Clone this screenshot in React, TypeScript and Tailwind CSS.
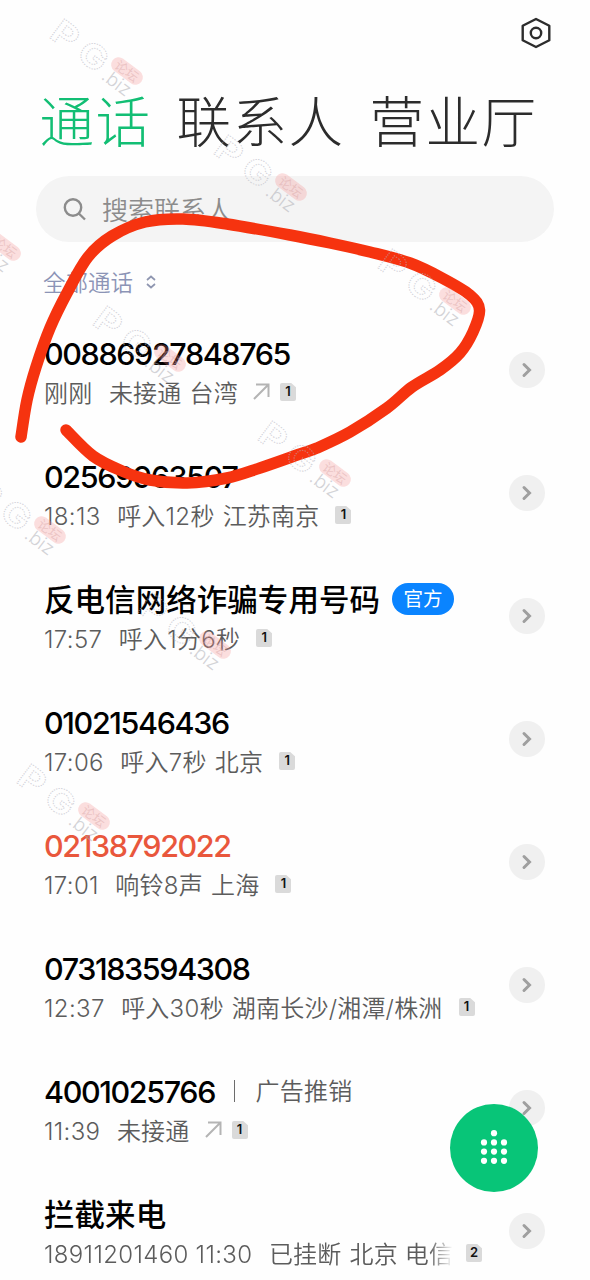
import React from "react";

type Call = {
  name: string;
  danger?: boolean;
  badge?: string;
  tag?: string;
  time: string;
  detail: string;
  place?: string;
  outgoing?: boolean;
  sim: number;
  faded?: boolean;
};

const calls: Call[] = [
  { name: "00886927848765", time: "刚刚", detail: "未接通", place: "台湾", outgoing: true, sim: 1 },
  { name: "02569963507", time: "18:13", detail: "呼入12秒", place: "江苏南京", sim: 1 },
  { name: "反电信网络诈骗专用号码", badge: "官方", time: "17:57", detail: "呼入1分6秒", sim: 1 },
  { name: "01021546436", time: "17:06", detail: "呼入7秒", place: "北京", sim: 1 },
  { name: "02138792022", danger: true, time: "17:01", detail: "响铃8声", place: "上海", sim: 1 },
  { name: "073183594308", time: "12:37", detail: "呼入30秒", place: "湖南长沙/湘潭/株洲", sim: 1 },
  { name: "4001025766", tag: "广告推销", time: "11:39", detail: "未接通", outgoing: true, sim: 1 },
  { name: "拦截来电", time: "18911201460 11:30", detail: "已挂断", place: "北京 电信", sim: 2, faded: true },
];

function Mixed({ text, latin }: { text: string; latin: string }) {
  return (
    <>
      {text.split(/([0-9:]+)/).map((part, i) =>
        i % 2 ? (
          <span key={i} className={latin}>{part}</span>
        ) : (
          <React.Fragment key={i}>{part}</React.Fragment>
        ),
      )}
    </>
  );
}

function Sim({ n }: { n: number }) {
  return (
    <span className="relative flex h-[18px] w-4 shrink-0 items-center justify-center">
      <svg className="absolute inset-0" width="16" height="18" viewBox="0 0 16 18">
        <path d="M2 0H11.2L16 4.2V16A2 2 0 0 1 14 18H2A2 2 0 0 1 0 16V2A2 2 0 0 1 2 0Z" fill="#dadada" />
      </svg>
      <span className="relative font-[Inter] text-[13px] leading-none font-semibold tracking-normal text-[#111]">{n}</span>
    </span>
  );
}

function Row({ call }: { call: Call }) {
  const sub = "tracking-[0.35px]";
  return (
    <div className="flex h-[123px] shrink-0 items-center justify-between pr-[45px] pl-[44px]">
      <div className="flex flex-col pt-1.5">
        <div className="flex h-10 items-center">
          <span
            className={`text-[30.5px] leading-10 font-medium tracking-[0.05px] ${call.danger ? "text-[#e9573c]" : "text-black"}`}
          >
            <Mixed text={call.name} latin="tracking-[-1.38px]" />
          </span>
          {call.badge && (
            <span className="mb-0.5 ml-3 flex h-8 w-[62px] items-center justify-center rounded-full bg-[#0a84ff] pt-0.5 text-[19.5px] text-white">
              {call.badge}
            </span>
          )}
          {call.tag && (
            <>
              <span className="mb-px ml-[19px] h-[22px] w-[1.5px] bg-[#6c6c6c]" />
              <span className="ml-5 text-2xl font-[350] tracking-[0.3px] text-[#5c5c5c]">{call.tag}</span>
            </>
          )}
        </div>
        <div className="flex h-10 items-center text-2xl font-[350] tracking-[0.2px] whitespace-nowrap text-[#5c5c5c]">
          <span className={call.faded ? "flex w-[409px] overflow-hidden [mask-image:linear-gradient(to_right,black_385px,transparent_409px)]" : "flex"}>
            <span><Mixed text={call.time} latin={sub} /></span>
            <span className="ml-[16.5px]"><Mixed text={call.detail} latin={sub} /></span>
            {call.place && <span className="ml-2">{call.place}</span>}
          </span>
          {call.outgoing && (
            <svg className="mb-1 ml-[15px] shrink-0" width="17" height="17" viewBox="0 0 17 17" fill="none" stroke="#b4b4b4" strokeWidth="2">
              <path d="M1 16L15.5 1.5M3 1.5H15.5V14" />
            </svg>
          )}
          <span className={call.outgoing ? "mb-1 ml-2.5" : call.faded ? "mb-1 ml-[13px]" : "mb-1 ml-4"}><Sim n={call.sim} /></span>
        </div>
      </div>
      <span className="mb-px flex size-9 shrink-0 items-center justify-center rounded-full bg-[#f0f0f0]">
        <svg width="12" height="16" viewBox="0 0 12 16" fill="none" stroke="#9f9f9f" strokeWidth="3" strokeLinecap="round">
          <path d="M3 2.5L8.5 8L3 13.5" />
        </svg>
      </span>
    </div>
  );
}

const stroke: [number, number][] = [
  [21, 437], [27, 400], [36, 367], [50, 328], [67, 293], [88, 257], [112, 236], [145, 222], [183, 219], [227, 224],
  [290, 235], [330, 243], [370, 252], [410, 263], [442, 278], [470, 295], [479.5, 310], [473, 332], [460, 353],
  [440, 370], [412, 387], [387, 408], [350, 432], [317, 448], [300, 454], [260, 468], [227, 478], [187, 483],
  [150, 480], [122, 471], [93, 456], [66, 430],
];

function smooth(p: [number, number][]) {
  let d = `M${p[0][0]} ${p[0][1]}`;
  for (let i = 0; i < p.length - 1; i++) {
    const a = p[i - 1] ?? p[i];
    const b = p[i];
    const c = p[i + 1];
    const e = p[i + 2] ?? c;
    d += `C${b[0] + (c[0] - a[0]) / 6} ${b[1] + (c[1] - a[1]) / 6} ${c[0] - (e[0] - b[0]) / 6} ${c[1] - (e[1] - b[1]) / 6} ${c[0]} ${c[1]}`;
  }
  return d;
}

const marks: [number, number][] = [
  [127, 71], [291, 187], [5, 247], [455, 301], [170, 358], [335, 473], [50, 530], [215, 645], [94, 816],
];

function Watermark({ x, y }: { x: number; y: number }) {
  return (
    <g transform={`translate(${x} ${y}) rotate(37)`} fontFamily="Inter, sans-serif">
      <g fill="none" stroke="#b4b4c0" strokeOpacity=".6" strokeWidth="1" strokeDasharray="1.2 1.2" fontWeight="700">
        <text transform="translate(-84 20) scale(1.2 1)" fontSize="33">P</text>
        <text transform="translate(-50 20) scale(1.15 1)" fontSize="33">G</text>
      </g>
      <text x="-17" y="22" fontSize="19" fontWeight="300" fill="#a8a8b0" fillOpacity=".5">.biz</text>
      <rect x="-18" y="-7.5" width="36" height="15" rx="7.5" fill="#f58a8a" fillOpacity=".27" />
      <text x="0" y="5" fontSize="13" textAnchor="middle" fill="#d8a4a4" fillOpacity=".45" fontFamily="Noto Sans CJK SC, sans-serif">论坛</text>
    </g>
  );
}

export default function App() {
  return (
    <div className="relative flex h-[1280px] w-[590px] flex-col overflow-hidden bg-[#fefefe] font-[Inter,'Noto_Sans_CJK_SC',sans-serif]">
      <div className="flex h-[66px] shrink-0 justify-end pt-[17px] pr-[38px]">
        <svg width="32" height="32" viewBox="0 0 32 32" fill="none" stroke="#2c2c2c" strokeWidth="2.4" strokeLinejoin="round">
          <path d="M16 2L29.3 8.8V23.2L16 30L2.7 23.2V8.8Z" />
          <circle cx="16" cy="16" r="5.2" />
        </svg>
      </div>
      <nav className="flex h-[110px] shrink-0 items-center gap-[25px] pt-0.5 pl-[39.5px] text-[54.5px] leading-none font-light tracking-[1.5px] text-[#2c2c2c]">
        <span className="text-[#12be74]">通话</span>
        <span>联系人</span>
        <span>营业厅</span>
      </nav>
      <div className="mx-9 flex h-[66px] shrink-0 items-center rounded-full bg-[#f4f4f4] pl-[27px] text-[#8c8c8c]">
        <svg width="24" height="24" viewBox="0 0 24 24" fill="none" stroke="#8c8c8c" strokeWidth="2.4">
          <circle cx="10" cy="10.5" r="8.2" />
          <path d="M15.8 16.5L22 22.5" />
        </svg>
        <span className="ml-[15px] pt-[3px] text-[26px] leading-none font-[350]">搜索联系人</span>
      </div>
      <div className="flex h-[67px] shrink-0 items-center pt-[15px] pl-[43px] text-[22.5px] leading-none font-[350] text-[#8c94b6]">
        <span>全部通话</span>
        <svg className="mb-0.5 ml-3" width="12" height="14" viewBox="0 0 12 14" fill="none" stroke="#8f96b0" strokeWidth="1.7">
          <path d="M2 5L6 1.5L10 5M2 9L6 12.5L10 9" />
        </svg>
      </div>
      <div className="flex shrink-0 flex-col">
        {calls.map((c) => (
          <Row key={c.name} call={c} />
        ))}
      </div>

      <button className="absolute top-[1104px] left-[450px] flex size-[88px] items-center justify-center rounded-full bg-[#08c578]">
        <svg width="30" height="36" viewBox="0 0 30 36" fill="white">
          <circle cx="15" cy="3.2" r="3.1" />
          {[12.4, 21.6, 30.8].map((y) => [5, 15, 25].map((x) => <circle key={`${x}-${y}`} cx={x} cy={y} r="3.1" />))}
        </svg>
      </button>

      <svg className="pointer-events-none absolute inset-0" width="590" height="1280" viewBox="0 0 590 1280">
        <path d={smooth(stroke)} fill="none" stroke="#f6330f" strokeWidth="11.5" strokeLinecap="round" strokeLinejoin="round" />
        {marks.map(([x, y]) => (
          <Watermark key={`${x}-${y}`} x={x} y={y} />
        ))}
      </svg>
    </div>
  );
}
